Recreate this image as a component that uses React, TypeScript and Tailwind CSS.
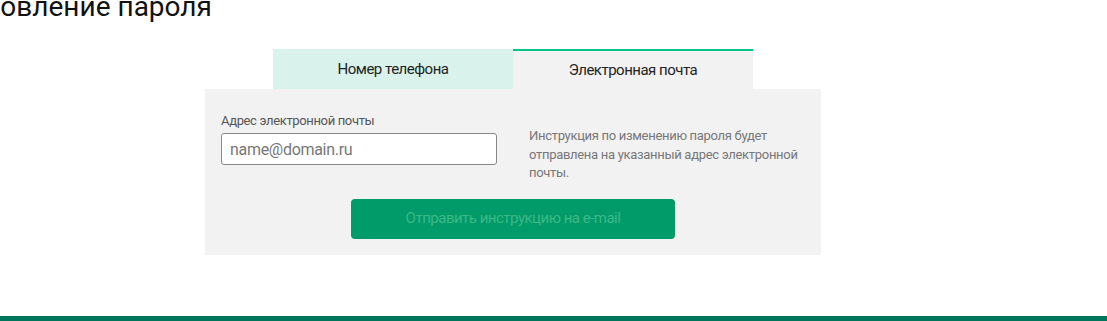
import React from "react";

export default function App() {
  return (
    <div
      className="relative w-[1107px] h-[321px] overflow-hidden bg-white"
      style={{ fontFamily: "Roboto, 'Noto Sans', sans-serif" }}
    >
      <h1 className="ml-[-107px] h-[24px] mt-[-9px] text-[28px] leading-[32px] font-normal text-[#111] whitespace-nowrap">
        Восстановление пароля
      </h1>

      <div className="ml-[205px] mt-[34px] w-[616px]">
        <div className="ml-[68px] flex">
          <button className="w-[240px] h-[40px] bg-[#d9f2eb] text-[15px] tracking-[-0.5px] text-[#222]">
            Номер телефона
          </button>
          <button className="w-[240px] h-[40px] bg-[#f2f2f2] border-t-2 border-[#00c48c] text-[15px] tracking-[-0.5px] text-[#222]">
            Электронная почта
          </button>
        </div>

        <div className="bg-[#f2f2f2] px-4 pt-[24px] pb-4">
          <div className="flex items-start gap-8">
            <div className="w-[276px]">
              <label className="block text-[13px] leading-[16px] tracking-[-0.35px] text-[#555] mb-[4px]">
                Адрес электронной почты
              </label>
              <input
                type="text"
                placeholder="name@domain.ru"
                className="w-full h-[32px] px-2 bg-white border border-[#888] rounded-[3px] text-[16px] tracking-[-0.3px] text-[#333] placeholder:text-[#777] outline-none"
              />
            </div>
            <p className="w-[276px] mt-[14px] text-[13px] leading-[18.5px] tracking-[-0.3px] text-[#777]">
              Инструкция по изменению пароля будет отправлена на указанный адрес электронной почты.
            </p>
          </div>
          <div className="flex justify-center mt-[16px]">
            <button className="w-[324px] h-[40px] rounded-[4px] bg-[#009b69] text-[15px] tracking-[-0.5px] text-[#3db887]">
              Отправить инструкцию на e-mail
            </button>
          </div>
        </div>
      </div>

      <div className="absolute left-0 right-0 bottom-0 h-[5px] bg-[#00755a]" />
    </div>
  );
}
